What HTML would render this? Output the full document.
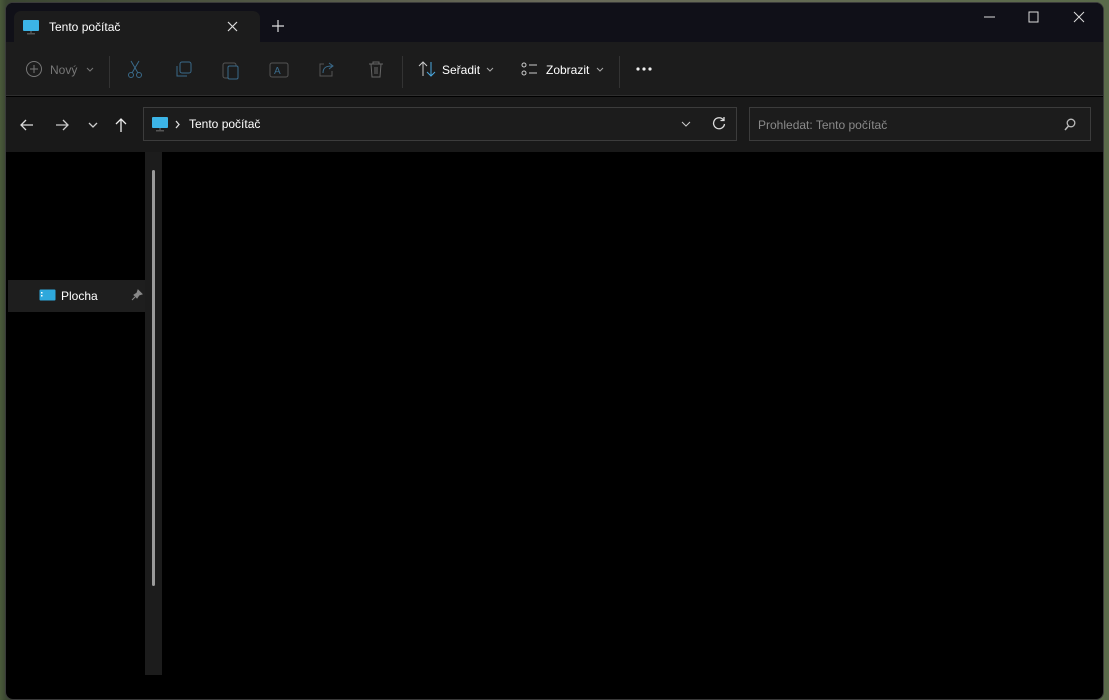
<!DOCTYPE html>
<html><head><meta charset="utf-8"><style>
*{margin:0;padding:0;box-sizing:border-box}
body{width:1109px;height:700px;overflow:hidden;background:linear-gradient(90deg,#4a5a3a 0,#3b4632 6px,#6a6a5a 50%,#5a6a4a 100%);font-family:"Liberation Sans","Noto Sans CJK SC",sans-serif;position:relative}
.win{position:absolute;left:5px;top:2px;width:1099px;height:698px;background:#000;border-radius:8px;overflow:hidden;border:1px solid #3a3a3a}
.title{position:absolute;left:0;top:0;width:100%;height:39px;background:#101018}
.tab{position:absolute;left:8px;top:8px;width:246px;height:31px;background:#1c1c1c;border-radius:7px 7px 0 0}
.tab .t{position:absolute;left:35px;top:9px;color:#fff;font-size:12px}
.tb{position:absolute;left:0;top:39px;width:100%;height:54px;background:#1c1c1c;border-bottom:1px solid #2e2e2e}
.nav{position:absolute;left:0;top:94px;width:100%;height:55px;background:#191919}
.box{position:absolute;border:1px solid #3c3c3c;background:#1c1c1c;height:34px;top:10px}
.lbl{position:absolute;color:#fff;font-size:12px}
svg{position:absolute}
.side{position:absolute;left:2px;top:277px;width:137px;height:32px;background:#1e1e1e}
.track{position:absolute;left:139px;top:149px;width:17px;height:523px;background:#1c1c1c}
.thumb{position:absolute;left:146px;top:167px;width:3px;height:416px;background:#9a9a9a;border-radius:2px}
</style></head><body>
<div class="win">
<div class="title">
 <div class="tab">
  <svg style="left:8px;top:8px" width="18" height="16" viewBox="0 0 18 16"><rect x="1" y="1" width="16" height="11" rx="1" fill="#3cb4e6"/><rect x="8" y="12" width="2" height="2" fill="#444"/><rect x="5" y="14" width="8" height="1.5" fill="#555"/></svg>
  <div class="t">Tento počítač</div>
  <svg style="left:213px;top:10px" width="11" height="11"><path d="M1 1L10 10M10 1L1 10" stroke="#ddd" stroke-width="1.2"/></svg>
 </div>
 <svg style="left:266px;top:17px" width="12" height="12"><path d="M6 0V12M0 6H12" stroke="#ddd" stroke-width="1.2"/></svg>
 <svg style="left:978px;top:13px" width="11" height="2"><path d="M0 1H11" stroke="#ddd"/></svg>
 <svg style="left:1022px;top:8px" width="12" height="12"><rect x="1" y="1" width="9" height="10" fill="none" stroke="#ddd"/></svg>
 <svg style="left:1067px;top:8px" width="12" height="12"><path d="M1 1L11 11M11 1L1 11" stroke="#ddd"/></svg>
</div>
<div class="tb">
 <svg style="left:19px;top:18px" width="18" height="18"><circle cx="9" cy="9" r="7.5" fill="none" stroke="#777"/><path d="M9 5V13M5 9H13" stroke="#777"/></svg>
 <div class="lbl" style="left:44px;top:21px;color:#777">Nový</div>
 <svg style="left:80px;top:25px" width="8" height="5"><path d="M1 1L4 4L7 1" stroke="#777" fill="none"/></svg>
 <div style="position:absolute;left:103px;top:14px;width:1px;height:32px;background:#333"></div>
 <svg style="left:121px;top:18px" width="16" height="18"><path d="M4 1L11 13M12 1L5 13" stroke="#3a6a8a" fill="none"/><circle cx="4" cy="15" r="2.5" fill="none" stroke="#3a6a8a"/><circle cx="12" cy="15" r="2.5" fill="none" stroke="#3a6a8a"/></svg>
 <svg style="left:168px;top:19px" width="18" height="18"><rect x="6" y="1" width="11" height="11" rx="2" fill="none" stroke="#3a6a8a"/><path d="M3 5V15H13" stroke="#3a6a8a" fill="none"/></svg>
 <svg style="left:216px;top:18px" width="18" height="20"><rect x="1" y="3" width="13" height="15" rx="2" fill="none" stroke="#555"/><rect x="6" y="6" width="10" height="13" rx="1.5" fill="#1c1c1c" stroke="#3a6a8a"/></svg>
 <svg style="left:263px;top:19px" width="20" height="18"><rect x="1" y="2" width="18" height="14" rx="2" fill="none" stroke="#555"/><text x="5" y="13" font-size="10" fill="#3a6a8a" font-family="Liberation Sans">A</text></svg>
 <svg style="left:311px;top:19px" width="20" height="18"><path d="M7 3H3V15H15V10" stroke="#555" fill="none"/><path d="M6 12C6 6 10 5 15 5M12 2L16 5L12 8" stroke="#3a6a8a" fill="none"/></svg>
 <svg style="left:362px;top:19px" width="16" height="18"><path d="M1 3H15M5 3V1H11V3M3 3L4 16H12L13 3M7 6V13M9 6V13" stroke="#666" fill="none"/></svg>
 <div style="position:absolute;left:396px;top:14px;width:1px;height:32px;background:#333"></div>
 <svg style="left:412px;top:19px" width="18" height="16"><path d="M5 15V1M1 5L5 1L9 5" stroke="#ccc" fill="none"/><path d="M13 1V15M9 11L13 15L17 11" stroke="#4aa8e0" fill="none"/></svg>
 <div class="lbl" style="left:436px;top:21px">Seřadit</div>
 <svg style="left:480px;top:25px" width="8" height="5"><path d="M1 1L4 4L7 1" stroke="#aaa" fill="none"/></svg>
 <svg style="left:515px;top:20px" width="18" height="14"><circle cx="3" cy="3" r="2" fill="none" stroke="#ccc"/><circle cx="3" cy="11" r="2" fill="none" stroke="#ccc"/><path d="M8 3H16M8 11H16" stroke="#ccc"/></svg>
 <div class="lbl" style="left:540px;top:21px">Zobrazit</div>
 <svg style="left:590px;top:25px" width="8" height="5"><path d="M1 1L4 4L7 1" stroke="#aaa" fill="none"/></svg>
 <div style="position:absolute;left:613px;top:14px;width:1px;height:32px;background:#333"></div>
 <svg style="left:630px;top:25px" width="18" height="4"><circle cx="2" cy="2" r="1.6" fill="#eee"/><circle cx="8" cy="2" r="1.6" fill="#eee"/><circle cx="14" cy="2" r="1.6" fill="#eee"/></svg>
</div>
<div class="nav">
 <svg style="left:14px;top:22px" width="14" height="12"><path d="M13 6H1M6 1L1 6L6 11" stroke="#ddd" fill="none" stroke-width="1.3"/></svg>
 <svg style="left:49px;top:22px" width="14" height="12"><path d="M1 6H13M8 1L13 6L8 11" stroke="#ccc" fill="none" stroke-width="1.3"/></svg>
 <svg style="left:82px;top:25px" width="10" height="6"><path d="M1 1L5 5L9 1" stroke="#ccc" fill="none" stroke-width="1.3"/></svg>
 <svg style="left:109px;top:21px" width="12" height="14"><path d="M6 14V1M1 6L6 1L11 6" stroke="#eee" fill="none" stroke-width="1.3"/></svg>
 <div class="box" style="left:137px;width:594px">
  <svg style="left:7px;top:8px" width="18" height="17" viewBox="0 0 18 17"><rect x="1" y="1" width="16" height="11" rx="1" fill="#3cb4e6"/><rect x="8" y="12" width="2" height="2" fill="#444"/><rect x="5" y="14" width="8" height="1.5" fill="#555"/></svg>
  <svg style="left:31px;top:12px" width="6" height="9"><path d="M1 1L4 4.5L1 8" stroke="#ddd" fill="none" stroke-width="1.3"/></svg>
  <div class="lbl" style="left:45px;top:9px">Tento počítač</div>
  <svg style="left:537px;top:13px" width="10" height="6"><path d="M1 1L5 5L9 1" stroke="#ccc" fill="none"/></svg>
  <svg style="left:568px;top:8px" width="14" height="14"><path d="M11.5 4A5.5 5.5 0 1 0 12.5 8M12 1V4.5H8.5" stroke="#ddd" fill="none" stroke-width="1.3"/></svg>
 </div>
 <div class="box" style="left:743px;width:342px">
  <div class="lbl" style="left:8px;top:10px;color:#8a8a8a;font-size:12px">Prohledat: Tento počítač</div>
  <svg style="left:314px;top:10px" width="12" height="13"><circle cx="7" cy="5" r="3.8" fill="none" stroke="#bbb" stroke-width="1.3"/><path d="M4.5 8L1 12" stroke="#bbb" stroke-width="1.5"/></svg>
 </div>
</div>
<div class="side">
 <svg style="left:31px;top:9px" width="17" height="13"><rect x="0.5" y="0.5" width="16" height="11" rx="1" fill="#2ea8dc"/><rect x="2" y="3" width="1.5" height="1.5" fill="#fff"/><rect x="2" y="6" width="1.5" height="1.5" fill="#fff"/></svg>
 <div class="lbl" style="left:53px;top:9px">Plocha</div>
 <svg style="left:123px;top:9px" width="12" height="12"><path d="M7 1L11 5L8 6L6 9L3 6L6 4Z M4 8L1 11" fill="#888" stroke="#888"/></svg>
</div>
<div class="track"></div>
<div class="thumb"></div>
</div>
</body></html>
